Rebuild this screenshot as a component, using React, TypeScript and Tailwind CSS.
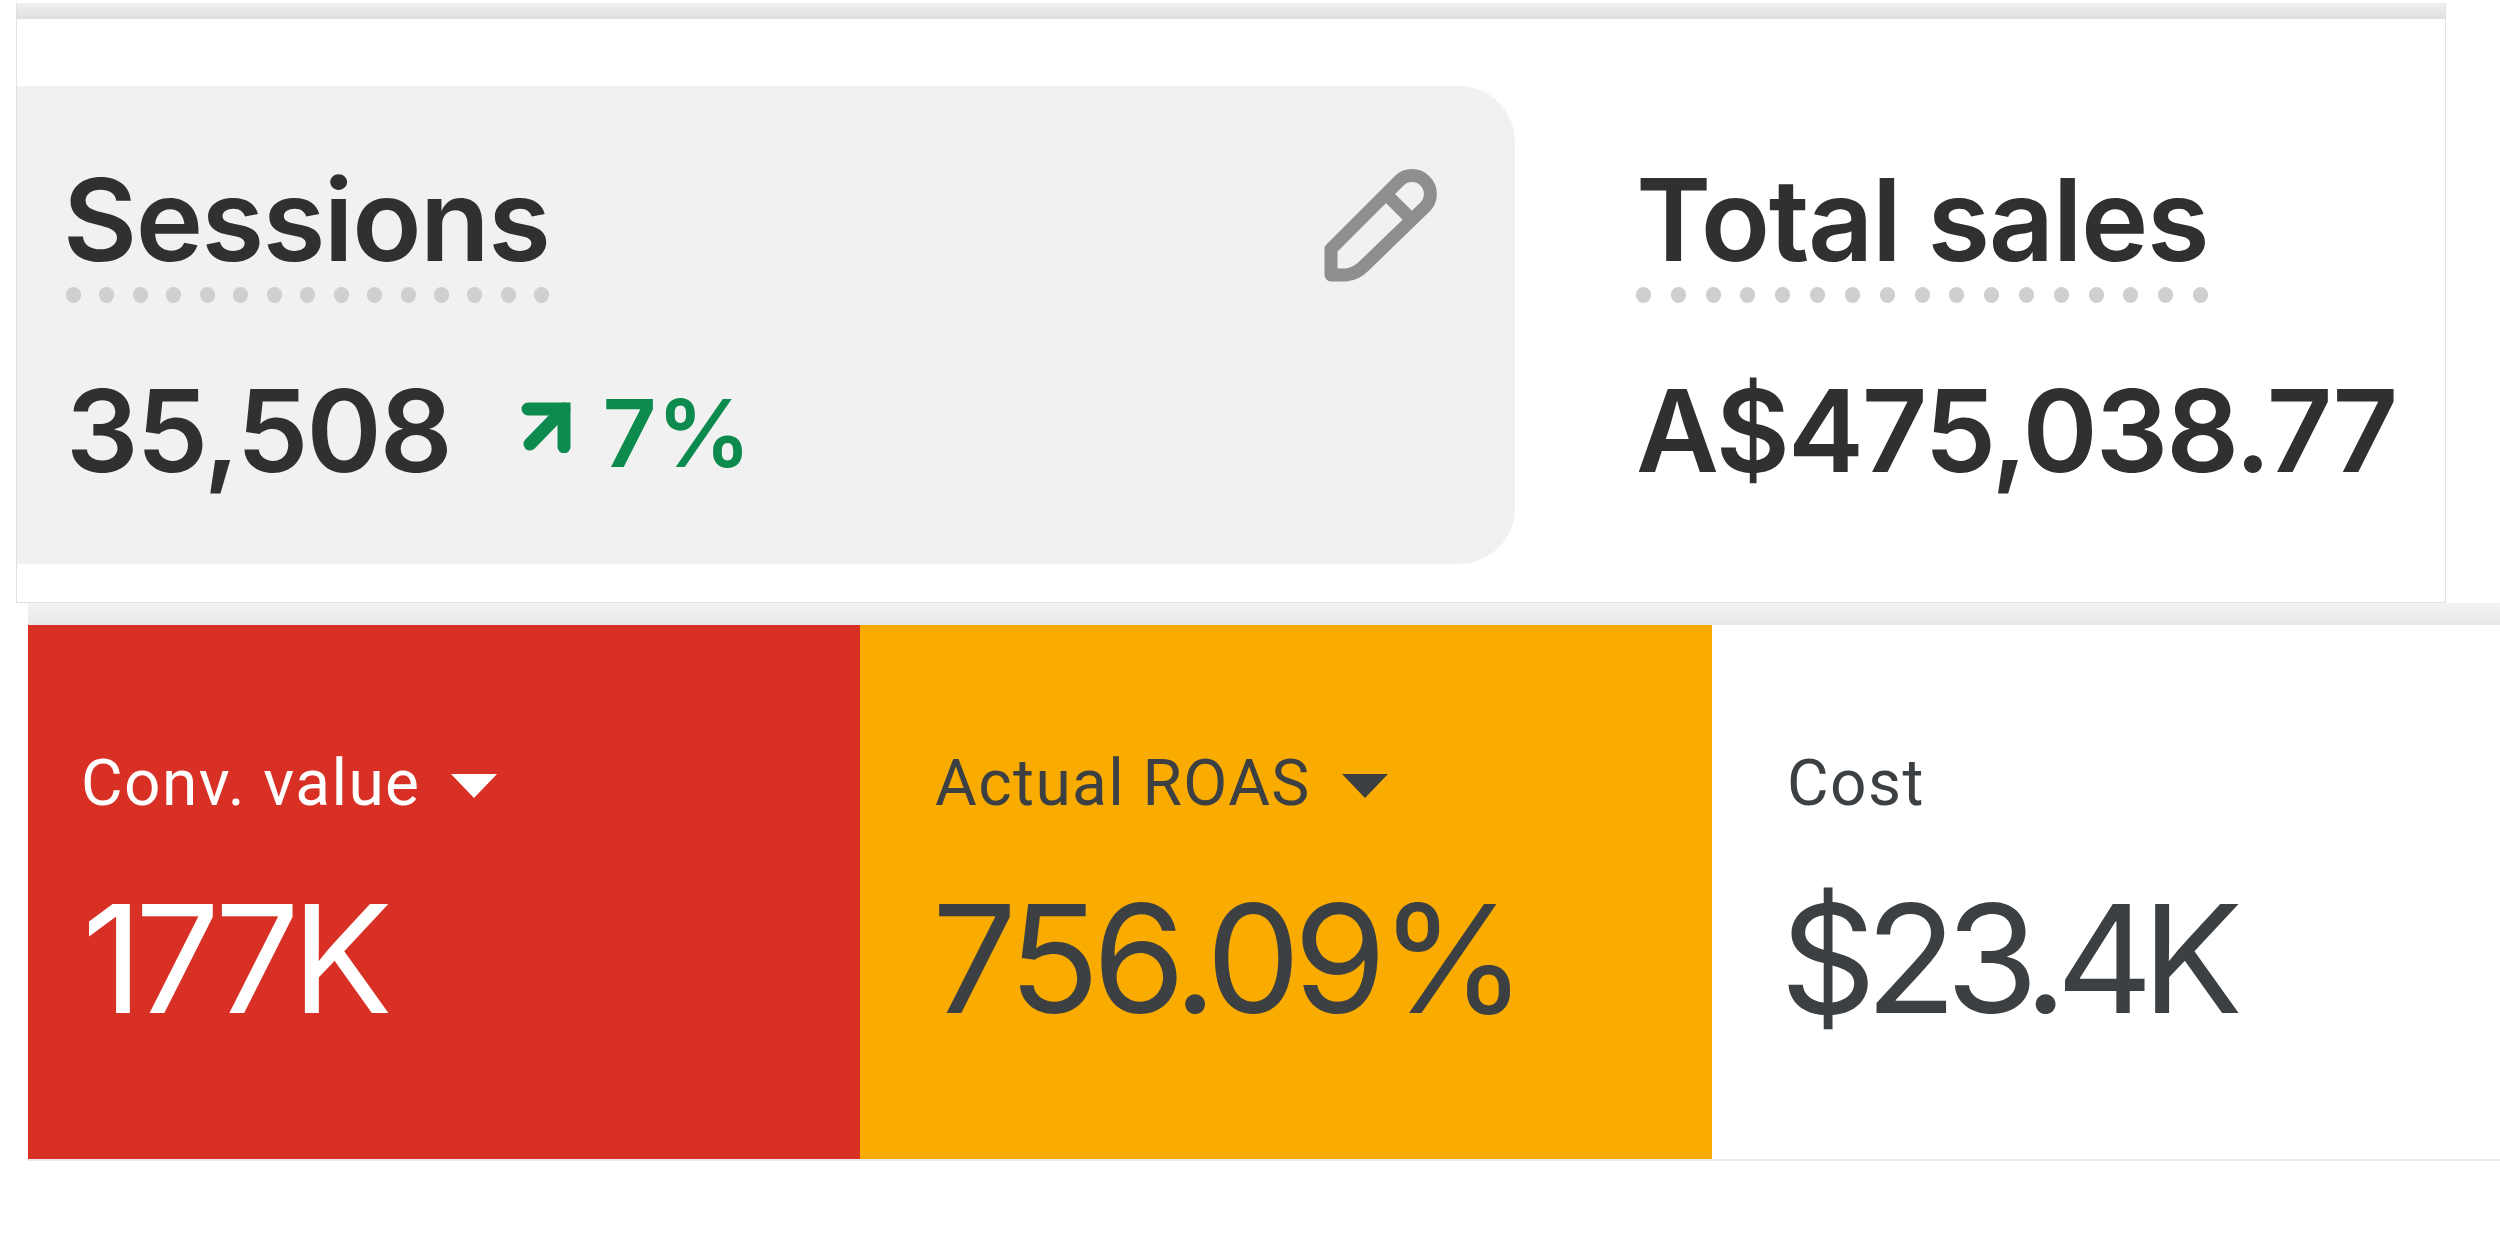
const dots = (n: number) => Array.from({ length: n }, (_, i) => i);

function DottedLabel({ text, count, dotsClass }: { text: string; count: number; dotsClass: string }) {
  return (
    <div className="inline-flex flex-col">
      <span className="h-[108px] text-[114px] leading-[108px] font-semibold text-[#303030] tracking-[-1.5px] whitespace-nowrap">{text}</span>
      <div className={`${dotsClass} mt-[13px] flex justify-between`}>
        {dots(count).map((i) => (
          <span key={i} className="w-[15px] h-[16px] rounded-full bg-[#cfcfcf]" />
        ))}
      </div>
    </div>
  );
}

function Pencil() {
  return (
    <svg className="overflow-visible" width="112" height="110" viewBox="0 0 112 110" fill="none" stroke="#8e8e8e" strokeWidth="13" strokeLinejoin="round" strokeLinecap="round">
      <path d="M7 104V78L75 10A18 18 0 0 1 101 36L40 95Q32 103 22 104Z" />
      <path d="M66 27L84 45" />
    </svg>
  );
}

function UpArrow() {
  return (
    <svg width="50" height="52" viewBox="0 0 50 52" fill="none" stroke="#0d8a4e" strokeWidth="13" strokeLinecap="round" strokeLinejoin="miter">
      <path d="M7 8H43V46" />
      <path d="M43 8L9 43" />
    </svg>
  );
}

function Caret({ color }: { color: string }) {
  return (
    <svg className="mt-[3px]" width="46" height="24" viewBox="0 0 46 24">
      <path d="M0 0H46L23 24Z" fill={color} />
    </svg>
  );
}

type TileProps = { label: string; value: string; bg: string; fg: string; width: string; valueClass: string; caret?: boolean };

function Tile({ label, value, bg, fg, width, valueClass, caret }: TileProps) {
  const color = fg === "text-white" ? "#ffffff" : "#3c4043";
  return (
    <div className={`${bg} ${fg} ${width} h-full pt-[127px]`}>
      <div className="flex items-center gap-[31px] h-[64px] text-[64px] leading-[64px] tracking-[1.4px] font-['Roboto',sans-serif] whitespace-nowrap">
        <span>{label}</span>
        {caret && <Caret color={color} />}
      </div>
      <div className={`${valueClass} mt-[68px] h-[150px] text-[150px] leading-[150px] font-['Inter',sans-serif] font-normal whitespace-nowrap`}>{value}</div>
    </div>
  );
}

export default function App() {
  return (
    <div className="w-[2500px] h-[1250px] bg-white overflow-hidden pt-[3px] font-['Inter',sans-serif]">
      {/* Top card */}
      <div className="ml-[16px] w-[2430px] h-[600px] border-x border-b border-[#e1e1e1] bg-white">
        <div className="h-[16px] bg-gradient-to-b from-[#f0f0f0] to-[#dfdfdf]" />
        <div className="flex mt-[67px]">
          <div className="w-[1498px] h-[478px] rounded-r-[56px] bg-[#f1f1f1] pl-[46px] pt-[80px] flex justify-between">
            <div>
              <DottedLabel text="Sessions" count={15} dotsClass="ml-[3px]" />
              <div className="flex items-center ml-[3px] mt-[73px] h-[110px]">
                <span className="text-[114px] leading-[110px] font-semibold text-[#303030] tracking-[-2px]">35,508</span>
                <span className="ml-[70px] -mt-[8px]"><UpArrow /></span>
                <span className="ml-[32px] mt-[4px] text-[94px] leading-[110px] font-semibold text-[#0d8a4e]">7%</span>
              </div>
            </div>
            <div className="mr-[79px] mt-[5px]"><Pencil /></div>
          </div>
          <div className="ml-[121px] pt-[80px]">
            <DottedLabel text="Total sales" count={17} dotsClass="ml-0" />
            <div className="mt-[73px] h-[110px] text-[114px] leading-[110px] font-semibold text-[#303030] tracking-[-2px] whitespace-nowrap">A$475,038.77</div>
          </div>
        </div>
      </div>

      {/* Scorecards */}
      <div className="ml-[28px] bg-gradient-to-b from-[#f1f3f4] to-[#e6e8ea] h-[22px]" />
      <div className="ml-[28px] h-[536px] flex border-b-2 border-[#e8eaed]">
        <Tile label="Conv. value" value="177K" bg="bg-[#d93025]" fg="text-white" width="w-[832px] pl-[53px]" valueClass="ml-[1px] tracking-[-8px]" caret />
        <Tile label="Actual ROAS" value="756.09%" bg="bg-[#f9ab00]" fg="text-[#3c4043]" width="w-[852px] pl-[75px]" valueClass="-ml-[3px] tracking-[-7px]" caret />
        <Tile label="Cost" value="$23.4K" bg="bg-white" fg="text-[#3c4043]" width="flex-1 pl-[75px]" valueClass="-ml-[7px] tracking-[-11px]" />
      </div>
    </div>
  );
}
